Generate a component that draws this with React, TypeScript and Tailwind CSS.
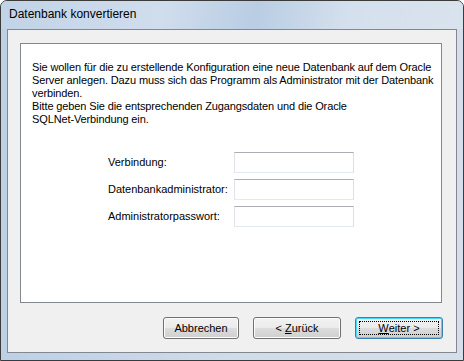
import React from 'react';

const font = { fontFamily: '"Liberation Sans", Arial, sans-serif' };

const Field: React.FC<{ label: string }> = ({ label }) => (
    <div className="flex items-center h-[21px]">
        <span className="w-[126px] text-[11px] text-black">{label}</span>
        <div className="w-[120px] h-[21px] bg-white border border-[#abadb3] border-r-[#dbdfe6] border-b-[#e3e9ef] border-l-[#e2e3ea]" />
    </div>
);

const Button: React.FC<{ children: React.ReactNode; width: string; focused?: boolean }> = ({ children, width, focused }) => (
    <div
        className={`${width} h-[22px] rounded-[3px] border flex items-center justify-center text-[11px] text-black ${
            focused
                ? 'border-[#3c7fb1] shadow-[inset_0_0_0_1px_#48d8fb]'
                : 'border-[#707070] shadow-[inset_0_0_0_1px_#fcfcfc]'
        } bg-[linear-gradient(to_bottom,#f2f2f2_0%,#ebebeb_50%,#dddddd_50%,#cfcfcf_100%)]`}
    >
        {focused ? (
            <div className="w-[calc(100%-6px)] h-[calc(100%-6px)] border border-dotted border-black flex items-center justify-center">
                {children}
            </div>
        ) : (
            children
        )}
    </div>
);

export default function App() {
    return (
        <div className="w-[464px] h-[361px] flex flex-col bg-[#c9d8e9] border border-[#3b3b3b] rounded-t-[7px] overflow-hidden" style={font}>
            <div className="h-[28px] flex items-center pl-[8px] bg-[linear-gradient(100deg,#c2d3e7_0%,#d0dded_35%,#b9cde3_55%,#d4e0ed_75%,#d9e3ee_100%)]">
                <span className="text-[12px] text-black -mt-[2px]">Datenbank konvertieren</span>
            </div>
            <div className="flex-1 flex px-[6px] pb-[7px] bg-[linear-gradient(to_right,#bcd0e6,#cfdcea,#d4dfeb)]">
                <div className="flex-1 flex flex-col bg-[#f0f0f0] border border-[#828790]">
                    <div className="mt-[13px] ml-[12px] w-[422px] h-[260px] bg-white border border-[#828790] pl-[11px] pt-[17px]">
                        <div className="text-[11px] leading-[13px] tracking-[-0.12px] text-black whitespace-nowrap">
                            <div>Sie wollen für die zu erstellende Konfiguration eine neue Datenbank auf dem Oracle</div>
                            <div>Server anlegen. Dazu muss sich das Programm als Administrator mit der Datenbank</div>
                            <div>verbinden.</div>
                            <div>Bitte geben Sie die entsprechenden Zugangsdaten und die Oracle</div>
                            <div>SQLNet-Verbindung ein.</div>
                        </div>
                        <div className="mt-[26px] ml-[76px] flex flex-col gap-[6px]">
                            <Field label="Verbindung:" />
                            <Field label="Datenbankadministrator:" />
                            <Field label="Administratorpasswort:" />
                        </div>
                    </div>
                    <div className="mt-[14px] flex justify-end gap-[14px] pr-[13px]">
                        <Button width="w-[76px]">Abbrechen</Button>
                        <Button width="w-[88px]">
                            &lt; <span className="underline ml-[3px]">Z</span>urück
                        </Button>
                        <Button width="w-[88px]" focused>
                            <span className="underline">W</span>eiter &gt;
                        </Button>
                    </div>
                </div>
            </div>
        </div>
    );
}
